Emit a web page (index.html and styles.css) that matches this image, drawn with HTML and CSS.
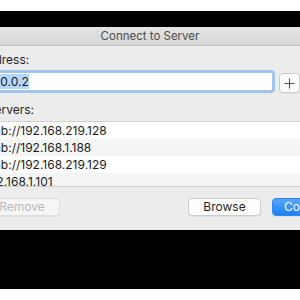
FILE: index.html
```html
<!DOCTYPE html>
<html>
<head>
    <title>Connect to Server</title>
    <meta charset="utf-8">
    <link rel="stylesheet" href="styles.css">
</head>
<body>
    <div class="backdrop">
        <div class="dialog">
            <div class="titlebar">Connect to Server</div>
            <div class="content">
                <div class="label">Server Address:</div>
                <div class="address-row">
                    <div class="field"><span class="selected">10.0.0.2</span></div>
                    <button class="plus" title="Add">
                        <svg width="11" height="11" viewBox="0 0 11 11">
                            <path d="M5.5 0.5v10M0.5 5.5h10" stroke="#505050" stroke-width="1.1" fill="none"/>
                        </svg>
                    </button>
                </div>
                <div class="label servers-label">Favorite Servers:</div>
                <div class="list">
                    <div class="row">smb://192.168.219.128</div>
                    <div class="row alt">smb://192.168.1.188</div>
                    <div class="row">smb://192.168.219.129</div>
                    <div class="row alt">192.168.1.101</div>
                </div>
                <div class="buttons">
                    <button class="btn" disabled>Remove</button>
                    <button class="btn browse">Browse</button>
                    <button class="btn primary">Connect</button>
                </div>
            </div>
        </div>
    </div>
</body>
</html>
```

FILE: styles.css
```css
body {
    margin: 0;
    background-color: #fff;
    font-family: Inter, "Liberation Sans", sans-serif;
    font-size: 12px;
    overflow: hidden;
}
.backdrop {
    margin-top: 11px;
    height: 278px;
    padding-top: 16px;
    box-sizing: border-box;
    background-color: #000;
    overflow: hidden;
}
.dialog {
    margin-left: -36px;
    width: 400px;
    height: 203px;
    background-color: #ececec;
}
.titlebar {
    height: 18px;
    line-height: 19px;
    padding-right: 28px;
    text-align: center;
    font-size: 11.5px;
    color: #4d4d4d;
    background: linear-gradient(#e6e5e6, #d6d5d6);
    border-bottom: 1px solid #c2c2c2;
}
.content {
    padding: 6px 20px 0 20px;
}
.label {
    line-height: 16px;
    color: #262626;
    margin-left: -46px;
}
.address-row {
    display: flex;
    gap: 6px;
    margin-top: 4px;
}
.field {
    width: 289px;
    height: 19px;
    box-sizing: border-box;
    padding: 0;
    line-height: 18px;
    background-color: #fff;
    border: 1px solid #a3c6f0;
    box-shadow: 0 0 0 2px rgba(140, 185, 240, 0.8);
    border-radius: 2px;
    color: #1a1a1a;
}
.selected {
    background-color: #b3d7ff;
}
.plus {
    display: flex;
    align-items: center;
    justify-content: center;
    width: 21px;
    height: 20px;
    margin-top: 1px;
    padding: 0;
    border: 1px solid #cbcbcb;
    border-radius: 4px;
    background-color: #fff;
    box-shadow: 0 1px 0 rgba(0, 0, 0, 0.05);
}
.servers-label {
    margin-top: 9px;
}
.list {
    margin-top: 3px;
    margin-left: -20px;
    margin-right: -20px;
    height: 64px;
    overflow: hidden;
    background-color: #fff;
    border-top: 1px solid #d2d2d2;
    border-bottom: 1px solid #d2d2d2;
}
.row {
    height: 17px;
    line-height: 18px;
    padding-left: 20px;
    color: #1a1a1a;
}
.row.alt {
    background-color: #f4f5f5;
}
.buttons {
    display: flex;
    gap: 11px;
    margin-top: 11px;
}
.btn {
    height: 18px;
    padding: 0;
    font-family: inherit;
    font-size: 12px;
    line-height: 16px;
    border-radius: 4px;
    border: 1px solid #cdcdcd;
    background-color: #fff;
    color: #262626;
    box-shadow: 0 1px 0 rgba(0, 0, 0, 0.06);
}
.btn:disabled {
    width: 76px;
    background-color: #f6f6f6;
    border-color: #dedede;
    color: #b9b9b9;
}
.browse {
    margin-left: auto;
    width: 73px;
}
.primary {
    width: 72px;
    border-color: #2e86f5;
    background: linear-gradient(#5ba8fc, #1a7ff5);
    color: #fff;
}
```
